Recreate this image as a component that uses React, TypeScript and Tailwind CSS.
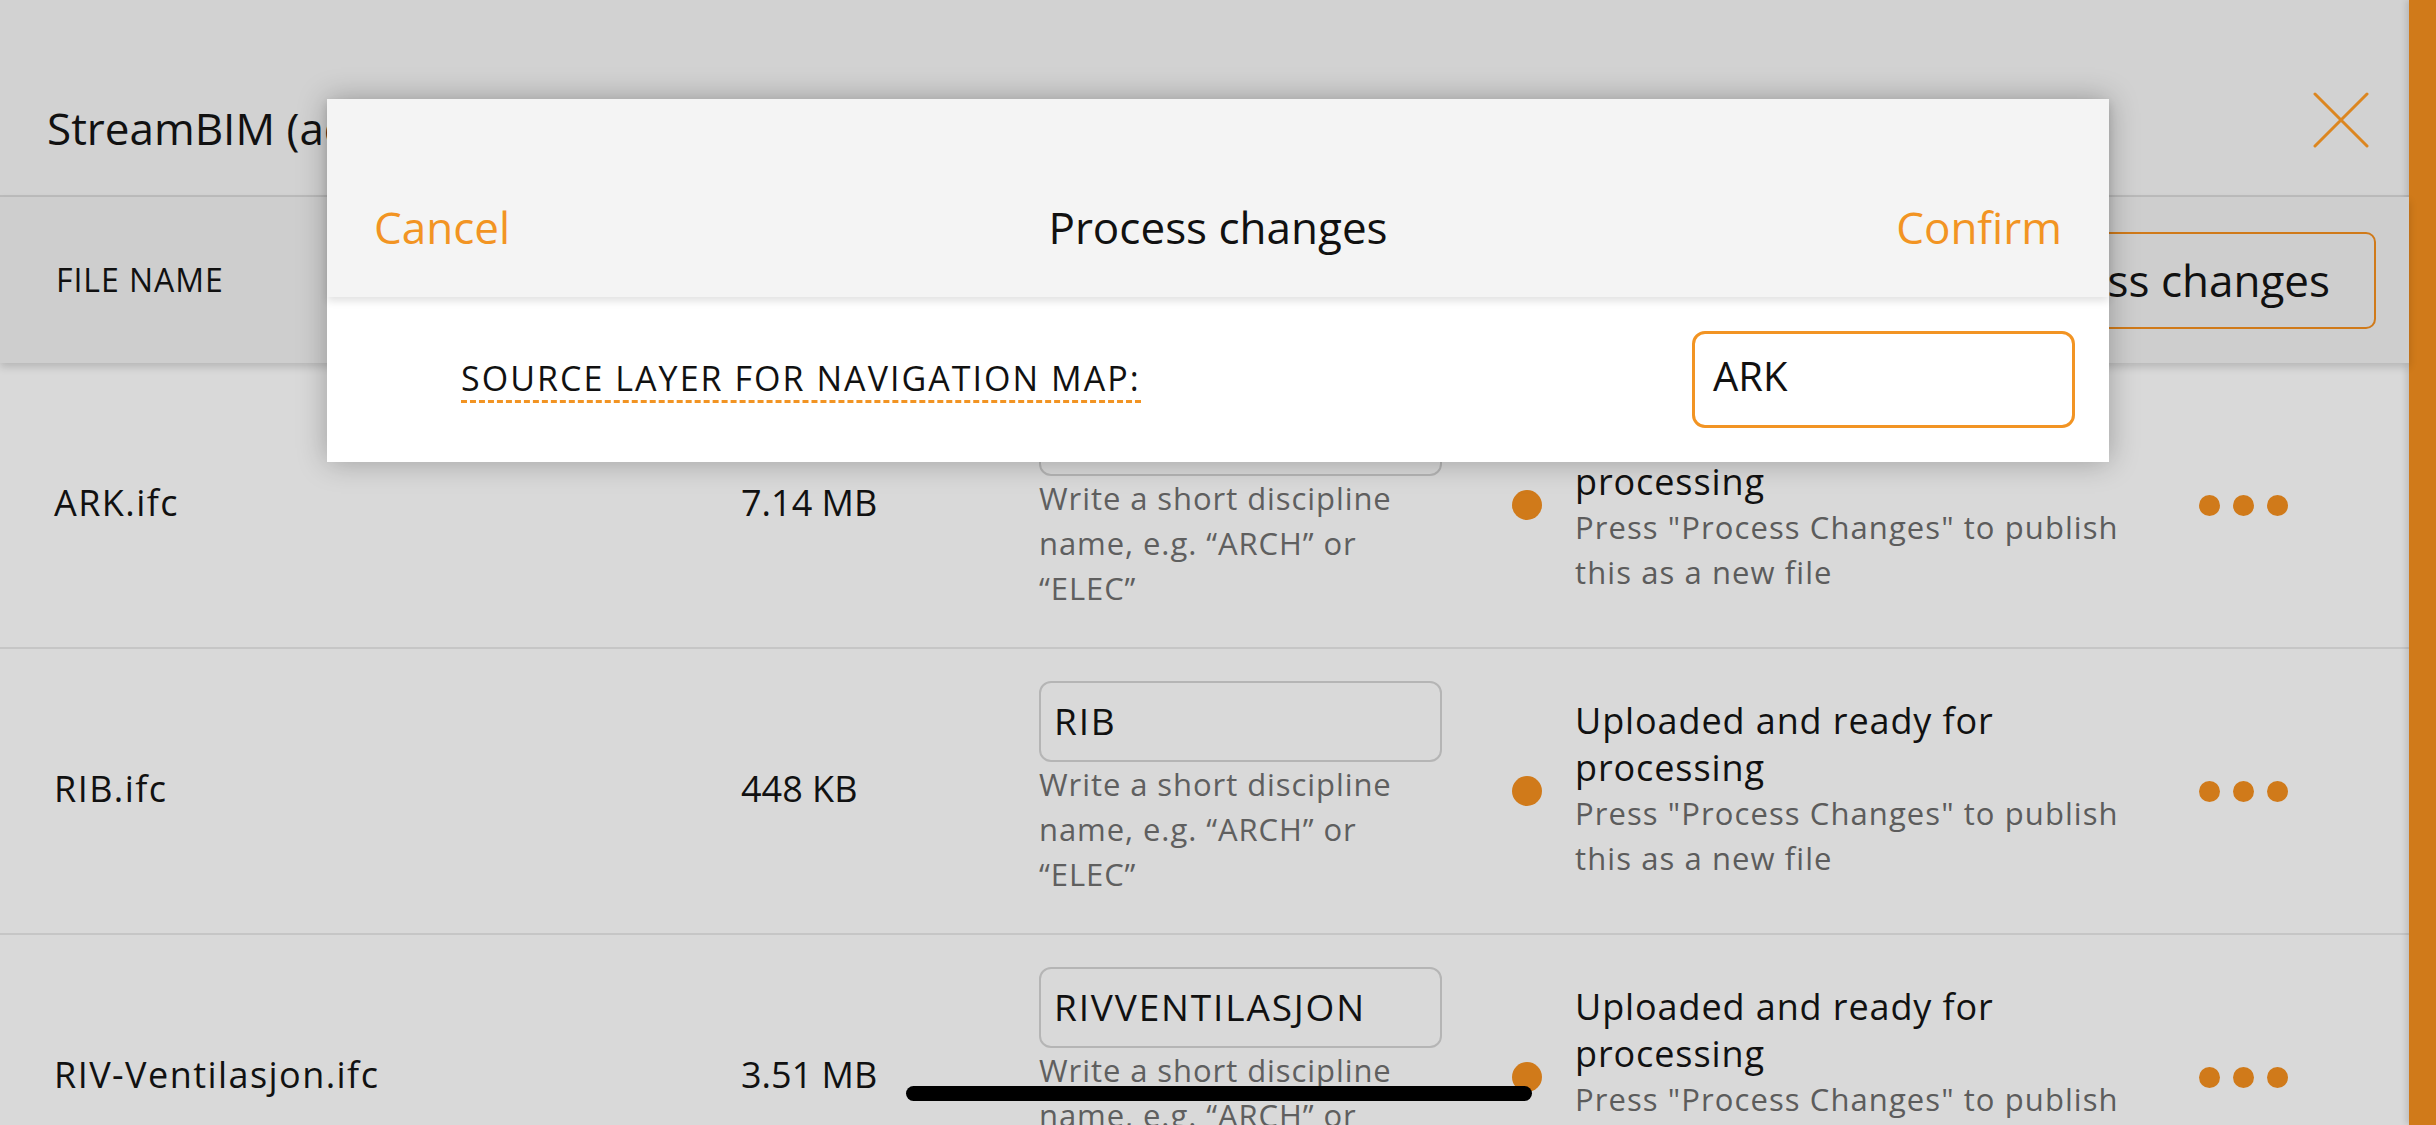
const font = { fontFamily: '"Open Sans", "Noto Sans", sans-serif' };

const rows = [
  { name: "ARK.ifc", size: "7.14 MB", discipline: "ARK" },
  { name: "RIB.ifc", size: "448 KB", discipline: "RIB" },
  { name: "RIV-Ventilasjon.ifc", size: "3.51 MB", discipline: "RIVVENTILASJON" },
];

function FileRow({ name, size, discipline }: { name: string; size: string; discipline: string }) {
  return (
    <div className="grid grid-cols-[687px_298px_473px_687px_1fr] items-center h-[286px] shrink-0 pl-[54px] border-b-2 border-[#c6c6c6] bg-[#d9d9d9]">
      <div className="text-[36px] tracking-[0.04em] text-[#111] -mt-[4px]">{name}</div>
      <div className="text-[36px] text-[#111] -mt-[4px]">{size}</div>
      <div className="flex flex-col w-[403px] -mt-[4px]">
        <div className="h-[81px] rounded-[12px] border-2 border-[#b5b5b5] flex items-center px-[13px] pb-[2px] text-[37px] tracking-[0.05em] text-[#111]">
          {discipline}
        </div>
        <div className="text-[31px] leading-[45px] tracking-[0.03em] text-[#5f5f5f] w-[403px]">
          Write a short discipline name, e.g. “ARCH” or “ELEC”
        </div>
      </div>
      <div className="flex items-center gap-[33px]">
        <div className="w-[30px] h-[30px] rounded-full bg-[#d07a1a] shrink-0" />
        <div className="w-[560px] -mt-[4px]">
          <div className="text-[36px] leading-[47px] tracking-[0.025em] text-[#111]">Uploaded and ready for processing</div>
          <div className="text-[31px] leading-[45px] tracking-[0.035em] text-[#5c5c5c]">
            Press "Process Changes" to publish this as a new file
          </div>
        </div>
      </div>
      <div className="flex items-center gap-[13px]">
        <div className="w-[21px] h-[21px] rounded-full bg-[#d07a1a]" />
        <div className="w-[21px] h-[21px] rounded-full bg-[#d07a1a]" />
        <div className="w-[21px] h-[21px] rounded-full bg-[#d07a1a]" />
      </div>
    </div>
  );
}

export default function App() {
  return (
    <div className="relative w-[2436px] h-[1125px] overflow-hidden flex bg-[#d9d9d9]" style={font}>
      {/* page behind the sheet */}
      <div className="flex-1 flex flex-col">
        <header className="h-[197px] shrink-0 flex items-center justify-between pl-[47px] pr-[40px] pt-[60px] bg-[#d2d2d2] border-b-2 border-[#bdbdbd]">
          <h1 className="text-[44px] text-[#111]">StreamBIM (admin)</h1>
          <button className="w-[56px] h-[56px] -mt-[16px]">
            <svg viewBox="0 0 56 56" className="w-[56px] h-[56px]">
              <path d="M2 2 L54 54 M54 2 L2 54" stroke="#dc8620" strokeWidth="3" strokeLinecap="round" />
            </svg>
          </button>
        </header>
        <div className="relative z-10 h-[166px] shrink-0 flex items-center justify-between pl-[56px] pr-[33px] bg-[#cecece] shadow-[0_4px_8px_rgba(0,0,0,0.16)]">
          <span className="text-[32px] tracking-[0.03em] text-[#111]">FILE NAME</span>
          <button className="h-[97px] px-[44px] rounded-[10px] border-2 border-[#d07a1a] text-[44px] text-[#111]">
            Process changes
          </button>
        </div>
        {rows.map((r) => (
          <FileRow key={r.name} {...r} />
        ))}
      </div>
      <div className="w-[27px] shrink-0 bg-[#d07a1a] shadow-[-3px_0_6px_rgba(0,0,0,0.12)]" />

      {/* modal sheet */}
      <div className="absolute z-30 left-[327px] top-[99px] w-[1782px] h-[363px] flex flex-col bg-white shadow-[0_0_28px_rgba(0,0,0,0.28)]">
        <div className="relative z-10 h-[198px] shrink-0 grid grid-cols-[1fr_auto_1fr] items-start px-[47px] pt-[98px] bg-[#f4f4f4] shadow-[0_4px_8px_rgba(0,0,0,0.12)]">
          <button className="justify-self-start text-[44px] leading-[60px] text-[#f29423]">Cancel</button>
          <span className="text-[44px] leading-[60px] text-[#111]">Process changes</span>
          <button className="justify-self-end text-[44px] leading-[60px] text-[#f29423]">Confirm</button>
        </div>
        <div className="flex-1 flex items-center justify-between pl-[134px] pr-[34px]">
          <span className="text-[34px] leading-[44px] tracking-[0.06em] text-[#111] border-b-[3px] border-dashed border-[#f29423]">
            SOURCE LAYER FOR NAVIGATION MAP:
          </span>
          <div className="w-[383px] h-[97px] rounded-[13px] border-[3px] border-[#f29423] flex items-center pl-[18px] pb-[8px] text-[40px] text-[#111]">
            ARK
          </div>
        </div>
      </div>

      {/* home indicator */}
      <div className="absolute z-40 left-[906px] top-[1086px] w-[626px] h-[15px] rounded-full bg-black" />
    </div>
  );
}
